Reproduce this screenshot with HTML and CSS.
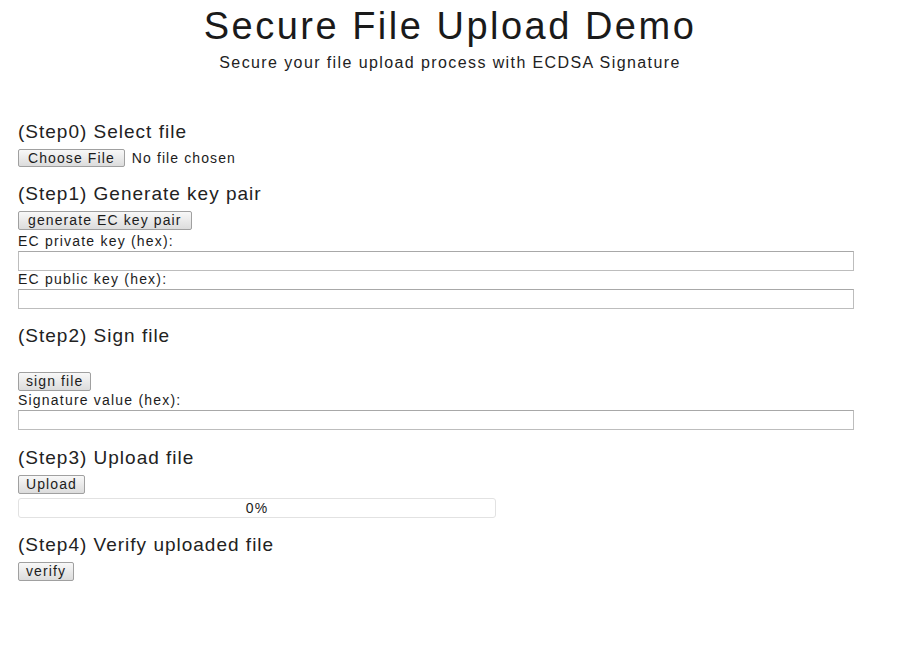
FILE: index.html
```html
<!DOCTYPE html>
<html>
<head>
<meta charset="utf-8">
<title>Secure File Upload Demo</title>
<link rel="stylesheet" href="styles.css">
</head>
<body>
<header class="hero">
  <h1 class="title">Secure File Upload Demo</h1>
  <p class="subtitle">Secure your file upload process with ECDSA Signature</p>
</header>
<main class="steps">
  <section class="step step-first">
    <h2 class="step-title">(Step0) Select file</h2>
    <div class="file-row">
      <button class="btn btn-choose">Choose File</button>
      <span class="file-name">No file chosen</span>
    </div>
  </section>
  <section class="step">
    <h2 class="step-title">(Step1) Generate key pair</h2>
    <button class="btn btn-wide">generate EC key pair</button>
    <label class="field-label">EC private key (hex):</label>
    <div class="field"></div>
    <label class="field-label field-label-flush">EC public key (hex):</label>
    <div class="field"></div>
  </section>
  <section class="step">
    <h2 class="step-title step-title-spaced">(Step2) Sign file</h2>
    <button class="btn">sign file</button>
    <label class="field-label field-label-tight">Signature value (hex):</label>
    <div class="field"></div>
  </section>
  <section class="step step-upload">
    <h2 class="step-title">(Step3) Upload file</h2>
    <button class="btn">Upload</button>
    <div class="progress"><span class="progress-text">0%</span></div>
  </section>
  <section class="step">
    <h2 class="step-title">(Step4) Verify uploaded file</h2>
    <button class="btn">verify</button>
  </section>
</main>
</body>
</html>
```

FILE: styles.css
```css
* {
  box-sizing: border-box;
}

body {
  margin: 0;
  background: #ffffff;
  color: #1c1c1c;
  font-family: "Liberation Sans", Arial, sans-serif;
}

.hero {
  padding-top: 4px;
  text-align: center;
}

.title {
  margin: 0;
  font-size: 38px;
  line-height: 44px;
  font-weight: normal;
  letter-spacing: 2.5px;
  color: #1a1a1a;
}

.subtitle {
  margin: 6px 0 0;
  font-size: 16px;
  line-height: 18px;
  letter-spacing: 1.4px;
  color: #222;
}

.steps {
  padding: 0 18px;
  margin-top: 49px;
}

.step {
  display: flex;
  flex-direction: column;
  align-items: flex-start;
  margin-top: 16px;
}

.step-first {
  margin-top: 0;
}

.step-upload {
  margin-top: 17px;
}

.step-title {
  margin: 0 0 6px;
  font-size: 19px;
  line-height: 22px;
  font-weight: normal;
  letter-spacing: 1px;
  color: #222;
}

.step-title-spaced {
  margin-bottom: 25px;
}

.file-row {
  display: flex;
  align-items: center;
  gap: 7px;
}

.file-name {
  font-size: 14px;
  line-height: 16px;
  letter-spacing: 1.1px;
  color: #1c1c1c;
}

.btn {
  height: 19px;
  padding: 0 7px;
  font-family: "Liberation Sans", Arial, sans-serif;
  font-size: 14px;
  line-height: 17px;
  letter-spacing: 1.1px;
  color: #1c1c1c;
  background: linear-gradient(#f8f8f8, #dcdcdc);
  border: 1px solid #a0a0a0;
  border-radius: 2px;
}

.btn-choose {
  height: 18px;
  padding: 0 9px;
  line-height: 16px;
}

.btn-wide {
  padding: 0 9px;
}

.field-label {
  margin-top: 3px;
  font-size: 14px;
  line-height: 16px;
  letter-spacing: 1.2px;
  color: #1c1c1c;
}

.field-label-tight {
  margin-top: 1px;
}

.field-label-flush {
  margin-top: 0;
}

.field {
  width: 836px;
  height: 20px;
  margin-top: 2px;
  background: #fff;
  border: 1px solid #bdbdbd;
  border-top-color: #a8a8a8;
}

.progress {
  width: 478px;
  height: 20px;
  margin-top: 4px;
  display: flex;
  align-items: center;
  justify-content: center;
  border: 1px solid #e2e2e2;
  border-radius: 3px;
  background: #fff;
}

.progress-text {
  font-size: 14px;
  letter-spacing: 1.1px;
  color: #1c1c1c;
}
```
